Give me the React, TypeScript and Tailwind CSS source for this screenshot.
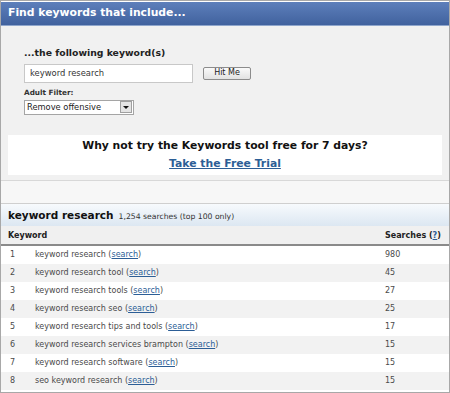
import React from 'react';

const rows = [
  { n: 1, kw: 'keyword research', s: 980 },
  { n: 2, kw: 'keyword research tool', s: 45 },
  { n: 3, kw: 'keyword research tools', s: 27 },
  { n: 4, kw: 'keyword research seo', s: 25 },
  { n: 5, kw: 'keyword research tips and tools', s: 17 },
  { n: 6, kw: 'keyword research services brampton', s: 15 },
  { n: 7, kw: 'keyword research software', s: 15 },
  { n: 8, kw: 'seo keyword research', s: 15 },
];

export default function App() {
  return (
    <div
      className="w-[450px] h-[393px] overflow-hidden bg-white border border-[#a8a8a8] text-[#333]"
      style={{ fontFamily: '"DejaVu Sans", Verdana, sans-serif' }}
    >
      {/* Title bar */}
      <div className="h-[24px] mt-[1px] bg-gradient-to-b from-[#5d7fbb] to-[#41629e] border-b border-[#8fa6cc] flex items-center px-[7px]">
        <span className="text-white font-bold text-[10.8px]">Find keywords that include...</span>
      </div>

      {/* Search form */}
      <div className="bg-[#f1f1f1] px-[23px] pt-[20px] h-[109px]">
        <div className="font-bold text-[9.3px] text-[#222]">...the following keyword(s)</div>
        <div className="flex items-center mt-[4px]">
          <div className="w-[169px] h-[19px] bg-white border border-[#c8c8c8] flex items-center px-[5px] text-[8.4px] text-[#333]">
            keyword research
          </div>
          <div className="ml-[10px] w-[48px] h-[13px] border border-[#8c8c8c] rounded-[2px] bg-gradient-to-b from-[#fafafa] to-[#e2e2e2] flex items-center justify-center text-[8px] text-[#222]">
            Hit Me
          </div>
        </div>
        <div className="mt-[5px] font-bold text-[7.3px] text-[#333]">Adult Filter:</div>
        <div className="mt-[1px] w-[110px] h-[15px] bg-white border border-[#a5a5a5] flex items-center text-[8.3px] text-[#222]">
          <span className="flex-1 pl-[2px]">Remove offensive</span>
          <span className="w-[12px] h-[12px] mr-[1px] border border-[#a0a0a0] bg-[#e4e4e4] flex items-center justify-center">
            <span className="w-0 h-0 border-l-[3px] border-r-[3px] border-t-[3px] border-l-transparent border-r-transparent border-t-[#111]" />
          </span>
        </div>
      </div>

      {/* Promo */}
      <div className="bg-[#f1f1f1] px-[7px] pb-[5px]">
        <div className="bg-white h-[40px] flex flex-col items-center justify-center">
          <div className="font-bold text-[10.8px] text-[#111]">Why not try the Keywords tool free for 7 days?</div>
          <div className="font-bold text-[10.8px] text-[#2c5e96] underline mt-[1px]">Take the Free Trial</div>
        </div>
      </div>

      {/* Spacer */}
      <div className="h-[24px] bg-[#f7f7f7] border-t border-[#d8d8d8] border-b border-b-[#cfcfcf]" />

      {/* Results heading */}
      <div className="h-[22px] bg-gradient-to-b from-[#f7fafd] to-[#dce7f2] flex items-baseline px-[7px] pt-[4px]">
        <span className="font-bold text-[10.5px] text-[#111]">keyword research</span>
        <span className="ml-[5px] text-[7.7px] text-[#333]">1,254 searches (top 100 only)</span>
      </div>

      {/* Column header */}
      <div className="h-[20px] bg-[#f0f0f0] border-b-2 border-[#8a8a8a] flex items-center px-[7px] pt-[1px] text-[8px] font-bold text-[#222]">
        <span className="flex-1">Keyword</span>
        <span className="w-[57px]">
          Searches (<span className="text-[#2c5e96] underline">?</span>)
        </span>
      </div>

      {/* Rows */}
      {rows.map((r, i) => (
        <div
          key={r.n}
          className={`h-[18px] flex items-center text-[8px] text-[#4a4a4a] ${i % 2 === 1 ? 'bg-[#f2f2f2]' : 'bg-white'}`}
        >
          <span className="w-[34px] pl-[9px]">{r.n}</span>
          <span className="flex-1">
            {r.kw} (<span className="text-[#2c5e96] underline">search</span>)
          </span>
          <span className="w-[64px]">{r.s}</span>
        </div>
      ))}
    </div>
  );
}
